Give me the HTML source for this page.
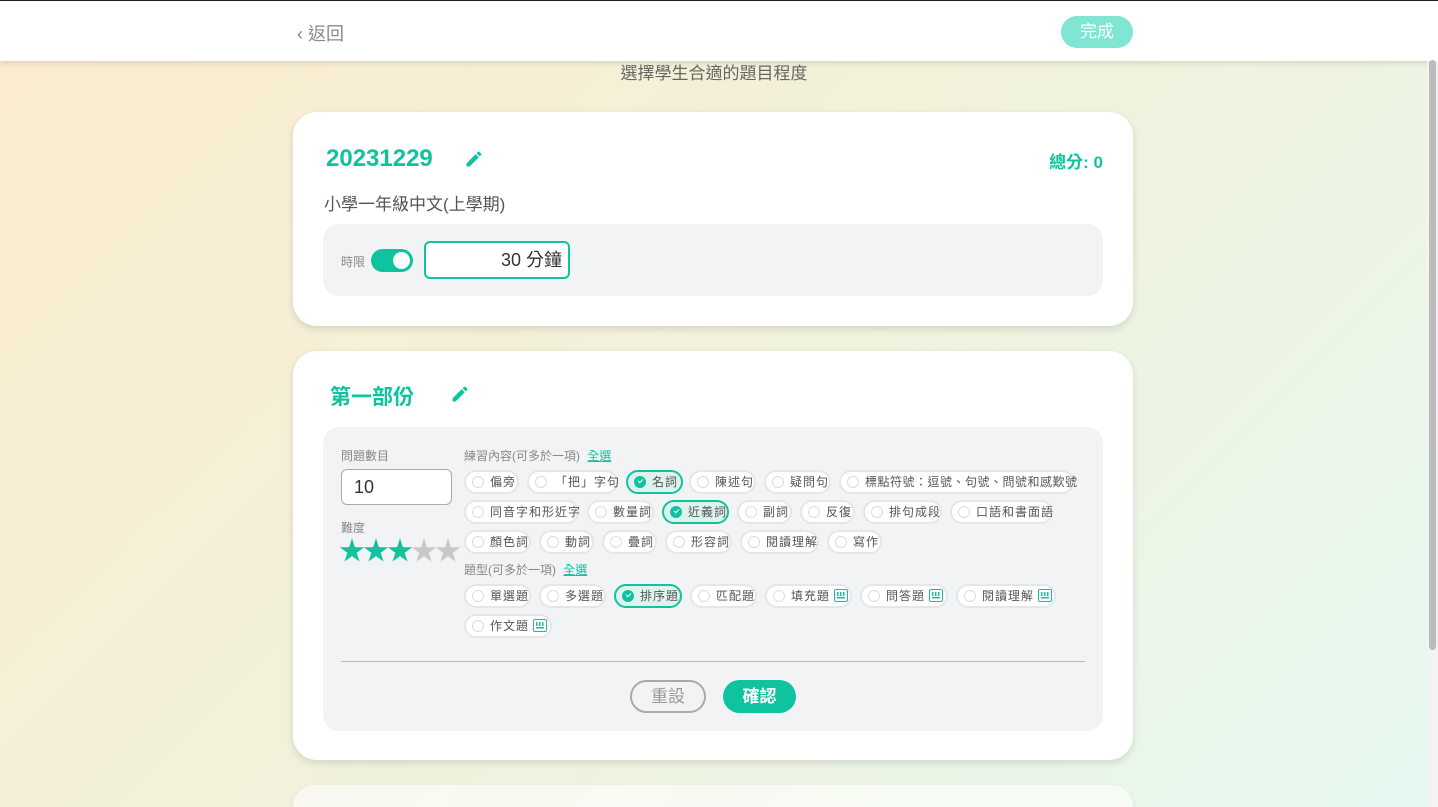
<!DOCTYPE html>
<html style="width:1438px;height:807px;overflow:hidden"><head><meta charset="utf-8"><style>
*{box-sizing:border-box;margin:0;padding:0}
body{width:1438px;height:807px;overflow:hidden;position:relative;font-family:"Liberation Sans","Noto Sans CJK TC",sans-serif;background:linear-gradient(135deg,#fcecce 0%,#f2f1da 45%,#eaf6e8 80%,#e6f8f0 100%)}
.hdr{position:absolute;left:0;top:0;width:1438px;height:61px;background:#fff;border-top:1px solid #222;box-shadow:0 2px 6px rgba(0,0,0,.12)}
.back{position:absolute;left:297px;top:19px;font-size:18px;color:#888}
.done{position:absolute;left:1061px;top:15px;width:72px;height:32px;border-radius:16px;background:#80e6d3;color:#fff;font-size:17px;text-align:center;line-height:32px}
.sb{position:absolute;left:1427px;top:61px;width:11px;height:746px;background:#f3f3f3}
.thumb{position:absolute;left:1429px;top:60px;width:7px;height:590px;background:#bbb;border-radius:4px}
.sub{position:absolute;left:0;width:1428px;top:59px;text-align:center;font-size:17px;color:#666}
.card{position:absolute;left:293px;width:840px;background:#fff;border-radius:24px;box-shadow:0 3px 8px rgba(0,0,0,.12)}
.teal{color:#10c39f}
.gray{position:absolute;background:#f2f3f5;border-radius:16px}
.chip{position:absolute;height:24px;border:2px solid #e6e6e6;border-radius:12px;background:#fff;font-size:12px;color:#555;line-height:20px;padding-left:24px;white-space:nowrap;letter-spacing:1px}
.chip:before{content:"";position:absolute;left:6px;top:4px;width:12px;height:12px;border-radius:50%;border:1px solid #ddd;box-sizing:border-box}
.chip.s{background:#dff3ee;border-color:#10c39f}
.chip.s:before{background:#10c39f;border-color:#10c39f}
.chip.s:after{content:"";position:absolute;left:10px;top:7px;width:4px;height:2px;border-left:1.5px solid #fff;border-bottom:1.5px solid #fff;transform:rotate(-45deg)}
.kb{display:inline-block;width:14px;height:13px;border:1.5px solid #10c39f;border-radius:2px;vertical-align:-2px;margin-left:4px;background:repeating-linear-gradient(90deg,#10c39f 0 1.5px,transparent 1.5px 3px) 2px 2px/8px 4px no-repeat,linear-gradient(#10c39f,#10c39f) 2px 7px/8px 1.5px no-repeat}
.lbl{position:absolute;font-size:12px;color:#888}
</style></head><body>
<div class="hdr"><div class="back">‹ 返回</div><div class="done">完成</div></div>
<div class="sub">選擇學生合適的題目程度</div>
<div class="sb"></div><div class="thumb"></div>

<div class="card" style="top:112px;height:214px">
 <div class="teal" style="position:absolute;left:33px;top:33px;font-size:24px;font-weight:bold">20231229</div>
 <svg style="position:absolute;left:171px;top:37px" width="20" height="20" viewBox="0 0 24 24"><path fill="#10c39f" d="M3 17.25V21h3.75L17.8 9.94l-3.75-3.75L3 17.25zM20.7 7.04a1 1 0 000-1.41l-2.34-2.34a1 1 0 00-1.41 0l-1.83 1.83 3.75 3.75 1.83-1.83z"/></svg>
 <div class="teal" style="position:absolute;right:30px;top:36px;font-size:17px;font-weight:bold">總分: 0</div>
 <div style="position:absolute;left:31px;top:78px;font-size:17px;color:#555">小學一年級中文(上學期)</div>
 <div class="gray" style="left:30px;top:112px;width:780px;height:72px">
  <div class="lbl" style="left:18px;top:29px">時限</div>
  <div style="position:absolute;left:48px;top:25px;width:42px;height:23px;border-radius:12px;background:#10c39f"><div style="position:absolute;right:3px;top:3px;width:17px;height:17px;border-radius:50%;background:#fff"></div></div>
  <div style="position:absolute;left:101px;top:17px;width:146px;height:38px;border:2px solid #10c39f;border-radius:6px;background:#fff;text-align:right;padding-right:6px;line-height:34px;font-size:18px;color:#333">30 分鐘</div>
 </div>
</div>

<div class="card" style="top:351px;height:409px">
 <div class="teal" style="position:absolute;left:37px;top:30px;font-size:21px;font-weight:bold">第一部份</div>
 <svg style="position:absolute;left:157px;top:33px" width="20" height="20" viewBox="0 0 24 24"><path fill="#10c39f" d="M3 17.25V21h3.75L17.8 9.94l-3.75-3.75L3 17.25zM20.7 7.04a1 1 0 000-1.41l-2.34-2.34a1 1 0 00-1.41 0l-1.83 1.83 3.75 3.75 1.83-1.83z"/></svg>
 <div class="gray" style="left:30px;top:76px;width:780px;height:304px">
  <div class="lbl" style="left:18px;top:20px">問題數目</div>
  <div style="position:absolute;left:18px;top:42px;width:111px;height:36px;border:1px solid #aaa;border-radius:6px;background:#fff;font-size:18px;color:#333;line-height:34px;padding-left:12px">10</div>
  <div class="lbl" style="left:18px;top:92px">難度</div>
  <div style="position:absolute;left:16px;top:109px;font-size:26px;letter-spacing:-2px;line-height:30px"><span class="teal">★★★</span><span style="color:#c8c8c8">★★</span></div>
  <div class="lbl" style="left:141px;top:20px">練習內容(可多於一項) <span class="teal" style="text-decoration:underline;margin-left:4px">全選</span></div>
  <div class="lbl" style="left:141px;top:134px">題型(可多於一項) <span class="teal" style="text-decoration:underline;margin-left:4px">全選</span></div>
  <hr style="position:absolute;left:18px;top:234px;width:744px;border:0;border-top:1px solid #bbb">
  <div style="position:absolute;left:307px;top:253px;width:76px;height:33px;border:2px solid #aaa;border-radius:17px;text-align:center;line-height:29px;font-size:17px;color:#999">重設</div>
  <div style="position:absolute;left:400px;top:253px;width:73px;height:33px;border-radius:17px;background:#10c39f;text-align:center;line-height:33px;font-size:17px;color:#fff;font-weight:bold">確認</div>
 </div>
</div>
<div class="card" style="top:785px;height:22px;border-radius:24px 24px 0 0;opacity:.6"></div>

<div class="chip" style="left:464px;top:470px;width:55px">偏旁</div>
<div class="chip" style="left:527px;top:470px;width:91px;padding-left:26px">「把」字句</div>
<div class="chip s" style="left:626px;top:470px;width:57px">名詞</div>
<div class="chip" style="left:689px;top:470px;width:67px">陳述句</div>
<div class="chip" style="left:764px;top:470px;width:67px">疑問句</div>
<div class="chip" style="left:839px;top:470px;width:235px;letter-spacing:.5px">標點符號：逗號、句號、問號和感歎號</div>
<div class="chip" style="left:464px;top:500px;width:115px">同音字和形近字</div>
<div class="chip" style="left:587px;top:500px;width:67px">數量詞</div>
<div class="chip s" style="left:662px;top:500px;width:67px">近義詞</div>
<div class="chip" style="left:737px;top:500px;width:55px">副詞</div>
<div class="chip" style="left:800px;top:500px;width:55px">反復</div>
<div class="chip" style="left:863px;top:500px;width:79px">排句成段</div>
<div class="chip" style="left:950px;top:500px;width:103px">口語和書面語</div>
<div class="chip" style="left:464px;top:530px;width:67px">顏色詞</div>
<div class="chip" style="left:539px;top:530px;width:55px">動詞</div>
<div class="chip" style="left:602px;top:530px;width:55px">疊詞</div>
<div class="chip" style="left:665px;top:530px;width:67px">形容詞</div>
<div class="chip" style="left:740px;top:530px;width:79px">閱讀理解</div>
<div class="chip" style="left:827px;top:530px;width:55px">寫作</div>
<div class="chip" style="left:464px;top:584px;width:67px">單選題</div>
<div class="chip" style="left:539px;top:584px;width:67px">多選題</div>
<div class="chip s" style="left:614px;top:584px;width:68px">排序題</div>
<div class="chip" style="left:690px;top:584px;width:67px">匹配題</div>
<div class="chip" style="left:765px;top:584px;width:87px">填充題<span class="kb"></span></div>
<div class="chip" style="left:860px;top:584px;width:88px">問答題<span class="kb"></span></div>
<div class="chip" style="left:956px;top:584px;width:100px">閱讀理解<span class="kb"></span></div>
<div class="chip" style="left:464px;top:614px;width:88px">作文題<span class="kb"></span></div>
</body></html>
